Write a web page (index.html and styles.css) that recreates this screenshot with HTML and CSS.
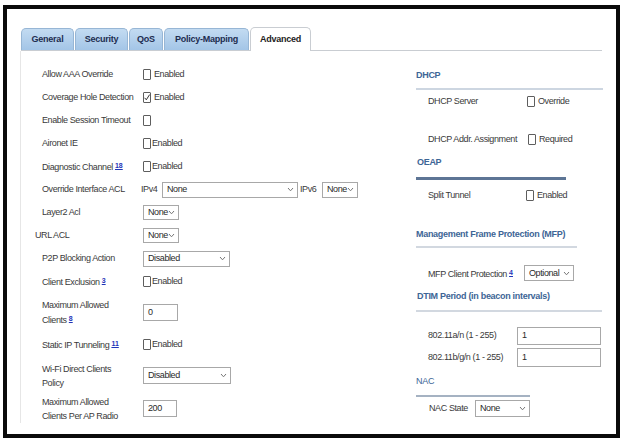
FILE: index.html
```html
<!DOCTYPE html>
<html>
<head>
<meta charset="utf-8">
<link rel="stylesheet" href="styles.css">
</head>
<body>
<div class="frame">
  <div class="tabs">
    <div class="tab w-general">General</div>
    <div class="tab w-security">Security</div>
    <div class="tab w-qos">QoS</div>
    <div class="tab w-policy">Policy-Mapping</div>
    <div class="tab w-adv active">Advanced</div>
  </div>
  <div class="panel">
    <div class="left">
      <div class="row"><div class="lbl">Allow AAA Override</div><span class="cb"></span><span class="cbt">Enabled</span></div>
      <div class="row"><div class="lbl">Coverage Hole Detection</div><span class="cb"><svg width="6" height="9" viewBox="0 0 6 9"><path d="M0.6 4.8 L2.3 6.8 L5.6 1.6" fill="none" stroke="#333" stroke-width="1"/></svg></span><span class="cbt">Enabled</span></div>
      <div class="row"><div class="lbl">Enable Session Timeout</div><span class="cb"></span></div>
      <div class="row"><div class="lbl">Aironet IE</div><span class="cb"></span><span class="cbt tight">Enabled</span></div>
      <div class="row"><div class="lbl">Diagnostic Channel <span class="fn">18</span></div><span class="cb"></span><span class="cbt tight">Enabled</span></div>
      <div class="row"><div class="lbl">Override Interface ACL</div><span class="ipv4">IPv4</span><span class="sel s-ipv4"><span>None</span><svg class="chev" width="7" height="5" viewBox="0 0 7 5"><path d="M1 1 L3.5 3.8 L6 1" fill="none" stroke="#777" stroke-width="1"/></svg></span><span class="ipv6">IPv6</span><span class="sel s-ipv6"><span>None</span><svg class="chev" width="7" height="5" viewBox="0 0 7 5"><path d="M1 1 L3.5 3.8 L6 1" fill="none" stroke="#777" stroke-width="1"/></svg></span></div>
      <div class="row"><div class="lbl">Layer2 Acl</div><span class="sel s-small"><span>None</span><svg class="chev" width="7" height="5" viewBox="0 0 7 5"><path d="M1 1 L3.5 3.8 L6 1" fill="none" stroke="#777" stroke-width="1"/></svg></span></div>
      <div class="row"><div class="lbl out">URL ACL</div><span class="sel s-small"><span>None</span><svg class="chev" width="7" height="5" viewBox="0 0 7 5"><path d="M1 1 L3.5 3.8 L6 1" fill="none" stroke="#777" stroke-width="1"/></svg></span></div>
      <div class="row"><div class="lbl">P2P Blocking Action</div><span class="sel s-wide"><span>Disabled</span><svg class="chev" width="7" height="5" viewBox="0 0 7 5"><path d="M1 1 L3.5 3.8 L6 1" fill="none" stroke="#777" stroke-width="1"/></svg></span></div>
      <div class="row"><div class="lbl">Client Exclusion <span class="fn">3</span></div><span class="cb"></span><span class="cbt tight">Enabled</span></div>
      <div class="row r-max"><div class="lbl two">Maximum Allowed<br>Clients <span class="fn">8</span></div><span class="inp i-small">0</span></div>
      <div class="row r-static"><div class="lbl">Static IP Tunneling <span class="fn">11</span></div><span class="cb"></span><span class="cbt tight">Enabled</span></div>
      <div class="row r-wifi"><div class="lbl two">Wi-Fi Direct Clients<br>Policy</div><span class="sel s-wide s-wifi"><span>Disabled</span><svg class="chev" width="7" height="5" viewBox="0 0 7 5"><path d="M1 1 L3.5 3.8 L6 1" fill="none" stroke="#777" stroke-width="1"/></svg></span></div>
      <div class="row r-radio"><div class="lbl two">Maximum Allowed<br>Clients Per AP Radio</div><span class="inp i-radio">200</span></div>
    </div>
    <div class="right">
      <div class="sec sec-dhcp">DHCP</div>
      <div class="rrow rr-server"><div class="rlbl">DHCP Server</div><span class="cb"></span><span class="cbt">Override</span></div>
      <div class="rrow rr-addr"><div class="rlbl l-addr">DHCP Addr. Assignment</div><span class="cb"></span><span class="cbt">Required</span></div>
      <div class="sec sec-oeap">OEAP</div>
      <div class="rrow rr-split"><div class="rlbl l-split">Split Tunnel</div><span class="cb"></span><span class="cbt">Enabled</span></div>
      <div class="sec sec-mfp">Management Frame Protection (MFP)</div>
      <div class="rrow rr-mfp"><div class="rlbl l-mfp">MFP Client Protection <span class="fn">4</span></div><span class="sel s-mfp"><span>Optional</span><svg class="chev" width="7" height="5" viewBox="0 0 7 5"><path d="M1 1 L3.5 3.8 L6 1" fill="none" stroke="#777" stroke-width="1"/></svg></span></div>
      <div class="sec sec-dtim">DTIM Period (in beacon intervals)</div>
      <div class="rrow rr-a"><div class="rlbl l-dtim">802.11a/n (1 - 255)</div><span class="inp i-dtim">1</span></div>
      <div class="rrow rr-b"><div class="rlbl l-dtim">802.11b/g/n (1 - 255)</div><span class="inp i-dtim i-dtim2">1</span></div>
      <div class="sec sec-nac">NAC</div>
      <div class="rrow rr-nac"><div class="rlbl l-nac">NAC State</div><span class="sel s-nac"><span>None</span><svg class="chev" width="7" height="5" viewBox="0 0 7 5"><path d="M1 1 L3.5 3.8 L6 1" fill="none" stroke="#777" stroke-width="1"/></svg></span></div>
    </div>
  </div>
</div>
</body>
</html>
```

FILE: styles.css
```css
html, body {
  margin: 0;
  padding: 0;
  background: #ffffff;
}
body {
  font-family: "Liberation Sans", Arial, sans-serif;
  font-size: 9px;
  letter-spacing: -0.4px;
  color: #3a3a3a;
  line-height: 11px;
}
.frame {
  margin: 5px 0 0 3px;
  width: 609px;
  height: 425px;
  border: 4px solid #0a0a0a;
  background: #ffffff;
  overflow: hidden;
}
.tabs {
  display: flex;
  gap: 1px;
  align-items: flex-end;
  margin: 19px 0 0 14px;
  width: 581px;
  height: 22px;
  border-bottom: 1px solid #c9cdd2;
}
.tab {
  box-sizing: border-box;
  height: 22px;
  display: flex;
  align-items: center;
  justify-content: center;
  background: linear-gradient(#c3dbf1, #a3c5e7);
  border: 1px solid #97b6d5;
  border-bottom: none;
  border-radius: 5px 5px 0 0;
  font-weight: bold;
  color: #1d2d50;
  letter-spacing: -0.25px;
}
.tab.active {
  background: #ffffff;
  border-color: #c9cdd2;
  height: 24px;
  margin-bottom: -1px;
  color: #222;
}
.w-general { width: 53px; }
.w-security { width: 53px; }
.w-qos { width: 34px; }
.w-policy { width: 85px; }
.w-adv { width: 61px; }

.panel {
  display: flex;
  margin-left: 13px;
  height: 372px;
}
.left {
  box-sizing: border-box;
  width: 380px;
  border-left: 1px solid #e6e6e6;
  padding-top: 12px;
}
.row {
  display: flex;
  align-items: center;
  height: 23px;
}
.lbl {
  flex: none;
  width: 101px;
  padding-left: 21px;
}
.lbl.out {
  width: 108px;
  padding-left: 14px;
}
.lbl.two { line-height: 14px; }
.r-max { height: 38px; }
.r-static { height: 27px; }
.r-wifi { height: 35px; }
.r-radio { height: 31px; }

.cb {
  box-sizing: border-box;
  flex: none;
  width: 8px;
  height: 11px;
  border: 1px solid #5e5e5e;
  border-radius: 1px;
  background: #fff;
  display: flex;
  align-items: center;
  justify-content: center;
}
.cbt { margin-left: 3px; }
.cbt.tight { margin-left: 1px; }

.fn {
  color: #1f35b8;
  font-weight: bold;
  font-size: 7px;
  text-decoration: underline;
  vertical-align: 2px;
  letter-spacing: 0;
}

.sel {
  box-sizing: border-box;
  height: 16px;
  border: 1px solid #a8a8a8;
  background: #fff;
  display: flex;
  align-items: center;
  justify-content: space-between;
  padding: 0 3px 0 4px;
  color: #2a2a2a;
  flex: none;
}
.chev { flex: none; }
.ipv4 { margin-left: -2px; width: 21px; flex: none; }
.ipv6 { margin-left: 2px; width: 22px; flex: none; }
.s-ipv4 { width: 136px; }
.s-ipv6 { width: 36px; }
.s-small { width: 36px; height: 15px; }
.s-wide { width: 87px; }
.s-wifi { width: 88px; height: 17px; }

.inp {
  box-sizing: border-box;
  height: 17px;
  border: 1px solid #a8a8a8;
  background: #fff;
  display: flex;
  align-items: center;
  padding-left: 4px;
  color: #2a2a2a;
  flex: none;
}
.i-small { width: 35px; }
.i-radio { width: 34px; }

.right {
  margin-left: 16px;
  width: 187px;
}
.sec {
  font-weight: bold;
  color: #3d6596;
  letter-spacing: -0.3px;
}
.sec-dhcp {
  padding: 19px 0 7px 0;
  border-bottom: 2px solid #cdd6e1;
  width: 187px;
}
.sec-oeap {
  padding: 7px 0 9px 1px;
  border-bottom: 3px solid #5d7595;
  width: 149px;
}
.sec-mfp {
  padding: 19px 0 6px 0;
  border-bottom: 2px solid #d2d8e0;
  width: 161px;
}
.sec-dtim {
  padding: 3px 0 8px 1px;
  border-bottom: 2px solid #d2d8e0;
  width: 185px;
}
.sec-nac {
  padding: 9px 0 8px 0;
  border-bottom: 2px solid #a5b2c2;
  width: 114px;
  font-weight: normal;
}
.rrow {
  display: flex;
  align-items: center;
}
.rlbl {
  flex: none;
  width: 99px;
  padding-left: 12px;
}
.l-addr { width: 100px; }
.l-split { width: 98px; }
.l-mfp { width: 96px; }
.l-dtim { width: 89px; }
.l-nac { width: 46px; padding-left: 13px; }
.rr-server { height: 22px; }
.rr-addr { height: 22px; margin-top: 16px; }
.rr-split { height: 30px; }
.rr-mfp { height: 30px; margin-top: 10px; }
.rr-a { height: 19px; margin-top: 14px; }
.rr-b { height: 20px; margin-top: 2px; }
.rr-nac { height: 17px; margin-top: 3px; }
.s-mfp { width: 50px; }
.i-dtim { width: 84px; height: 18px; }
.i-dtim2 { height: 19px; }
.s-nac { width: 55px; height: 17px; }
```
